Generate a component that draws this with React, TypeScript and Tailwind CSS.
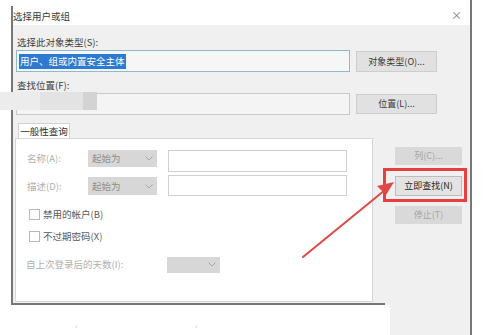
import React from "react";

const font = { fontFamily: '"Noto Sans CJK SC", "Noto Sans", sans-serif' };

const Chevron = ({ className = "" }: { className?: string }) => (
    <svg width="8" height="5" viewBox="0 0 8 5" className={className}>
        <path d="M0.5 0.5 L4 4 L7.5 0.5" fill="none" stroke="#a8a8a8" strokeWidth="1" />
    </svg>
);

const Combo = ({ text, w, h }: { text?: string; w: string; h: string }) => (
    <div className={`${w} ${h} bg-[#d7d7d7] flex items-center justify-between px-[4px]`}>
        <span className="text-[9.5px] text-[#8e8e8e]">{text}</span>
        <Chevron />
    </div>
);

const Check = ({ label }: { label: string }) => (
    <div className="flex items-center gap-[3px] ml-[13px]">
        <div className="w-[11px] h-[11px] border border-[#b9b9b9] bg-white" />
        <span className="text-[9.5px] text-[#5a5a5a]">{label}</span>
    </div>
);

export default function App() {
    return (
        <div className="relative w-[500px] h-[335px] bg-white overflow-hidden" style={font}>
            <div className="ml-[11px] pt-[6px] w-[461px] h-full flex flex-col border-r-2 border-[#777]">
                {/* dialog */}
                <div className="h-[299px] flex flex-col border-l-2 border-[#777]">
                    {/* title bar */}
                    <div className="h-[19px] bg-white flex items-center justify-between pr-[8px]">
                        <span className="text-[9.5px] text-[#3a3a3a] leading-none mt-[2px]">选择用户或组</span>
                        <span className="text-[11px] text-[#777] leading-none">×</span>
                    </div>

                    {/* upper fields */}
                    <div className="bg-[#f0f0f0] pt-[11px] flex flex-col">
                        <div className="pl-[4px] h-[12px] text-[9.5px] leading-[12px] text-[#3c3c3c]">选择此对象类型(S):</div>
                        <div className="mt-[2px] flex items-start pl-[3px] gap-[6px]">
                            <div className="w-[334px] h-[22px] bg-[#f6f6f6] border border-[#8fb9cc] flex items-center pl-[2px]">
                                <span className="bg-[#2e7ad3] text-white text-[9.5px] leading-[15px] px-[1px]">用户、组或内置安全主体</span>
                            </div>
                            <div className="mt-[1px] w-[81px] h-[21px] bg-[#e1e1e1] border border-[#cdcdcd] flex items-center justify-center text-[9px] text-[#3a3a3a]">对象类型(O)...</div>
                        </div>

                        <div className="mt-[7px] pl-[4px] h-[12px] text-[9.5px] leading-[12px] text-[#3c3c3c]">查找位置(F):</div>
                        <div className="mt-[2px] flex items-start pl-[3px] gap-[6px]">
                            <div className="w-[334px] h-[22px] bg-[#f4f4f4] border border-[#c9c9c9]" />
                            <div className="mt-[1px] w-[81px] h-[20px] bg-[#e1e1e1] border border-[#cdcdcd] flex items-center justify-center text-[9px] text-[#3a3a3a]">位置(L)...</div>
                        </div>

                        {/* tab header */}
                        <div className="mt-[8px] ml-[5px] w-[52px] h-[15px] bg-white border border-b-0 border-[#d2d2d2] flex items-center justify-center text-[9.5px] text-[#2f2f2f]">一般性查询</div>
                    </div>

                    {/* tab panel + side buttons */}
                    <div className="flex-1 flex bg-[#f0f0f0]">
                        <div className="w-[372px] border-b-2 border-[#777] pl-[2px] pr-[12px] pb-[1px] flex">
                            <div className="flex-1 bg-white border border-[#d7d7d7] pt-[11px] flex flex-col">
                                <div className="flex items-start">
                                    <span className="w-[72px] pl-[11px] text-[9.5px] text-[#b0b0b0] leading-[17px]">名称(A):</span>
                                    <Combo text="起始为" w="w-[69px]" h="h-[17px]" />
                                    <div className="ml-[11px] w-[179px] h-[22px] border border-[#d0d0d0] bg-white" />
                                </div>
                                <div className="mt-[3px] flex items-start">
                                    <span className="w-[72px] pl-[11px] text-[9.5px] text-[#b0b0b0] leading-[18px] mt-[2px]">描述(D):</span>
                                    <div className="mt-[2px]">
                                        <Combo text="起始为" w="w-[69px]" h="h-[18px]" />
                                    </div>
                                    <div className="ml-[11px] w-[179px] h-[21px] border border-[#d0d0d0] bg-white" />
                                </div>
                                <div className="mt-[11px]">
                                    <Check label="禁用的帐户(B)" />
                                </div>
                                <div className="mt-[8px]">
                                    <Check label="不过期密码(X)" />
                                </div>
                                <div className="mt-[13px] flex items-center">
                                    <span className="w-[151px] pl-[10px] text-[9.5px] text-[#b0b0b0]">自上次登录后的天数(I):</span>
                                    <Combo w="w-[53px]" h="h-[16px]" />
                                </div>
                            </div>
                        </div>
                        <div className="flex-1 flex flex-col pl-[10px] pt-[9px]">
                            <div className="w-[67px] h-[18px] bg-[#d9d9d9] flex items-center justify-center text-[9px] text-[#a6a6a6]">列(C)...</div>
                            <div className="mt-[11px] w-[67px] h-[20px] bg-[#e3e3e3] border border-[#bdbdbd] flex items-center justify-center text-[9px] text-[#262626]">立即查找(N)</div>
                            <div className="mt-[10px] w-[67px] h-[18px] bg-[#d9d9d9] flex items-center justify-center text-[9px] text-[#a6a6a6]">停止(T)</div>
                        </div>
                    </div>
                </div>

                {/* lower strip */}
                <div className="flex-1 flex">
                    <div className="w-[379px] bg-white relative">
                        <span className="absolute left-[64px] top-[18px] text-[8px] text-[#b8b8b8]">'</span>
                        <span className="absolute left-[184px] top-[18px] text-[8px] text-[#b8b8b8]">'</span>
                    </div>
                    <div className="flex-1 bg-[#f0f0f0]" />
                </div>
            </div>

            {/* privacy blur over location field */}
            <div className="absolute left-0 top-[92px] h-[18px] flex">
                <div className="w-[40px] bg-[#ececec]" />
                <div className="w-[43px] bg-[#e3e3e3]" />
                <div className="w-[14px] bg-[#d3d3d3]" />
            </div>

            {/* red highlight box */}
            <div className="absolute left-[383px] top-[168px] w-[84px] h-[34px] border-[3px] border-[#e5403f]" />

            {/* red arrow */}
            <svg className="absolute left-0 top-0" width="500" height="335" viewBox="0 0 500 335">
                <line x1="303" y1="257" x2="385" y2="190" stroke="#e04848" strokeWidth="2" strokeLinecap="round" />
                <polygon points="394,182 377,186 386,195" fill="#e04848" />
            </svg>
        </div>
    );
}
